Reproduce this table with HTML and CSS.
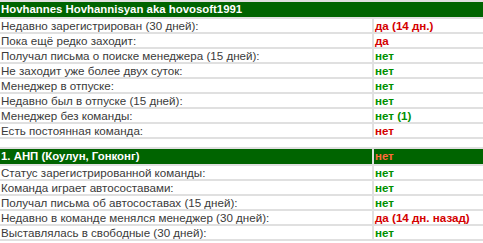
FILE: index.html
```html
<!DOCTYPE html>
<html>
<head>
<meta charset="utf-8">
<link rel="stylesheet" href="styles.css">
</head>
<body>
<table class="info">
  <tr class="head"><td colspan="2">Hovhannes Hovhannisyan aka hovosoft1991</td></tr>
  <tr><td class="label">Недавно зарегистрирован (30 дней):</td><td class="val yes">да (14 дн.)</td></tr>
  <tr><td class="label">Пока ещё редко заходит:</td><td class="val yes">да</td></tr>
  <tr><td class="label">Получал письма о поиске менеджера (15 дней):</td><td class="val no">нет</td></tr>
  <tr><td class="label">Не заходит уже более двух суток:</td><td class="val no">нет</td></tr>
  <tr><td class="label">Менеджер в отпуске:</td><td class="val no">нет</td></tr>
  <tr><td class="label">Недавно был в отпуске (15 дней):</td><td class="val no">нет</td></tr>
  <tr><td class="label">Менеджер без команды:</td><td class="val no">нет (1)</td></tr>
  <tr><td class="label">Есть постоянная команда:</td><td class="val yes">нет</td></tr>
</table>
<table class="info team">
  <tr class="head"><td class="label">1. АНП (Коулун, Гонконг)</td><td class="val warn">нет</td></tr>
  <tr><td class="label">Статус зарегистрированной команды:</td><td class="val no">нет</td></tr>
  <tr><td class="label">Команда играет автосоставами:</td><td class="val no">нет</td></tr>
  <tr><td class="label">Получал письма об автосоставах (15 дней):</td><td class="val no">нет</td></tr>
  <tr><td class="label">Недавно в команде менялся менеджер (30 дней):</td><td class="val yes">да (14 дн. назад)</td></tr>
  <tr><td class="label">Выставлялась в свободные (30 дней):</td><td class="val no">нет</td></tr>
</table>
</body>
</html>
```
FILE: styles.css
```css
html, body {
  margin: 0;
  padding: 0;
  background: #fff;
}
body {
  font-family: "Liberation Sans", Arial, sans-serif;
  font-size: 11.6px;
  color: #3a3a3a;
}
.info {
  width: 483px;
  border-collapse: collapse;
  border-bottom: 2px solid #e0e0e0;
}
.team {
  margin-top: 8px;
}
.info td {
  padding: 0 0 0 1px;
  height: 13px;
  line-height: 13px;
  border-top: 2px solid #e0e0e0;
  white-space: nowrap;
}
.info td.val {
  width: 108px;
  border-left: 2px solid #e0e0e0;
  font-weight: bold;
}
.info tr.head td {
  height: 15px;
  line-height: 15px;
  background: #006400;
  color: #fff;
  font-weight: bold;
  font-size: 11.4px;
}
.val.yes { color: #d40000; }
.val.no { color: #009000; }
.info tr.head td.warn { color: #ff6a3d; }
```
